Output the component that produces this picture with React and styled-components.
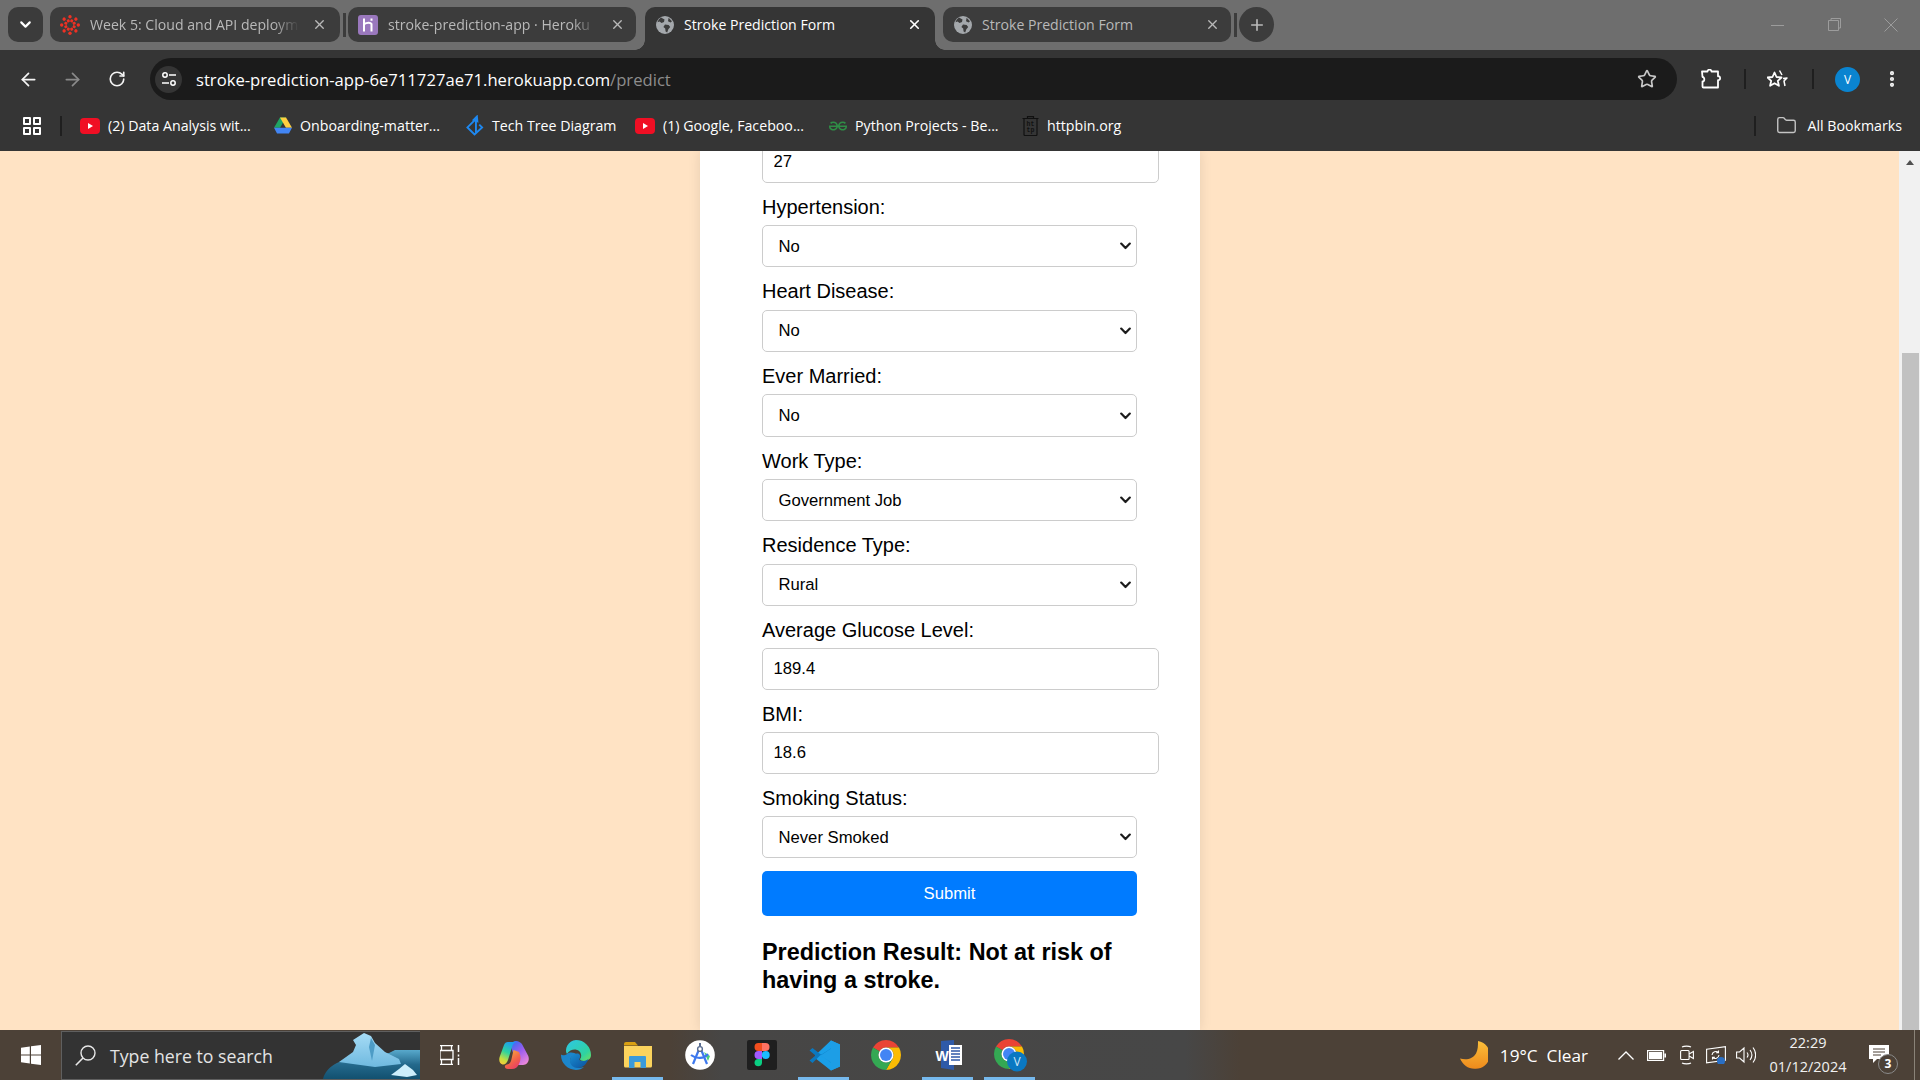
import React from "react";
import styled, { createGlobalStyle } from "styled-components";
import { X, Plus, ChevronDown, ArrowLeft, ArrowRight, RotateCw, Star, EllipsisVertical, Folder } from "lucide-react";
import { SiGeeksforgeeks } from "react-icons/si";

const Global = createGlobalStyle`
  html, body { margin: 0; padding: 0; height: 100%; overflow: hidden; }
  body { font-family: "Liberation Sans", Arial, sans-serif; }
  * { box-sizing: border-box; }
`;
const UI = `"Open Sans", "Noto Sans", sans-serif`;

const Screen = styled.div`width: 1920px; height: 1080px; display: flex; flex-direction: column; overflow: hidden;`;

/* ---------- tab strip ---------- */
const TabStrip = styled.div`height: 50px; flex: none; background: #6e6e6e; display: flex; align-items: flex-start; padding: 7px 0 0 8px;`;
const CaretButton = styled.div`width: 35px; height: 35px; border-radius: 10px; background: #3b3b3b; color: #fff; display: flex; align-items: center; justify-content: center; margin-right: 7px;`;
const Tab = styled.div`
  position: relative; flex: none; width: ${p => p.$w}px; height: ${p => (p.$active ? 43 : 35)}px;
  margin-left: ${p => p.$ml || 0}px; padding-left: ${p => p.$pl || 10}px; padding-right: ${p => p.$pr || 13}px;
  padding-bottom: ${p => (p.$active ? 8 : 0)}px;
  display: flex; align-items: center; gap: 10px;
  background: ${p => (p.$active ? "#353535" : "#3c3c3c")};
  border-radius: ${p => (p.$active ? "10px 10px 0 0" : "10px")};
  color: ${p => (p.$active ? "#ffffff" : "#b9b9b9")};
  ${p => p.$active && `
    &::before, &::after { content: ""; position: absolute; bottom: 0; width: 10px; height: 10px; }
    &::before { right: 100%; background: radial-gradient(circle at 0 0, transparent 9.5px, #353535 10px); }
    &::after { left: 100%; background: radial-gradient(circle at 100% 0, transparent 9.5px, #353535 10px); }
  `}
`;
const TabTitle = styled.span`
  flex: 1; min-width: 0; overflow: hidden; white-space: nowrap; font: 400 14.1px ${UI};
  ${p => p.$fade && `-webkit-mask-image: linear-gradient(90deg, #000 88%, transparent 100%); mask-image: linear-gradient(90deg, #000 88%, transparent 100%);`}
`;
const TabClose = styled(X)`flex: none; margin-left: 3px;`;
const TabSeparator = styled.div`flex: none; width: 3px; height: 24px; margin: 6px ${p => p.$mr || 2}px 0 3px; background: #3c3c3c;`;
const NewTab = styled.div`width: 35px; height: 35px; border-radius: 50%; background: #3c3c3c; color: #b9b9b9; display: flex; align-items: center; justify-content: center;`;
const WindowControls = styled.div`margin-left: auto; height: 35px; display: flex; align-items: center; padding-right: 22px; gap: 43.5px; color: #9c9c9c;`;

/* ---------- toolbar ---------- */
const Toolbar = styled.div`height: 50px; flex: none; background: #353535; display: flex; align-items: flex-start; padding: 8px 0 0 6px; color: #fff;`;
const NavButton = styled.div`width: 44px; height: 42px; flex: none; display: flex; align-items: center; justify-content: center; color: ${p => p.$dim ? "#8a8a8a" : "#f4f4f4"}; margin-left: ${p => p.$ml || 0}px;`;
const Omnibox = styled.div`flex: 1; min-width: 0; height: 42px; margin-left: 11px; border-radius: 21px; background: #1b1b1b; display: flex; align-items: center; padding-left: 5px; padding-right: 20px;`;
const SiteInfo = styled.div`width: 27px; height: 27px; flex: none; border-radius: 50%; background: #353535; display: flex; align-items: center; justify-content: center;`;
const Url = styled.div`margin-left: 14px; padding-top: 1px; font: 400 16.65px ${UI}; color: #fff; white-space: nowrap;`;
const UrlPath = styled.span`color: #8d8d8d;`;
const OmniStar = styled(Star)`margin-left: auto; color: #c8c8c8;`;
const ToolbarRight = styled.div`width: 243px; flex: none; display: flex; align-items: center; height: 42px;`;
const ToolDivider = styled.div`flex: none; width: 2px; height: 20px; background: #1f1f1f; margin-left: ${p => p.$ml}px;`;
const Avatar = styled.div`flex: none; width: 25px; height: 25px; margin-left: 21px; border-radius: 50%; background: #0a84d0; color: #fff; font: 400 12px ${UI}; display: flex; align-items: center; justify-content: center;`;

/* ---------- bookmarks ---------- */
const BookmarksBar = styled.div`height: 51px; flex: none; background: #353535; display: flex; align-items: center; padding-left: 23px; color: #fff; font: 400 14.2px ${UI};`;
const AppsGrid = styled.div`width: 18px; height: 18px; display: grid; grid-template-columns: 8px 8px; grid-auto-rows: 8px; gap: 2px; flex: none;`;
const AppsCell = styled.div`border: 2px solid #fff; border-radius: 1px;`;
const BarDivider = styled.div`flex: none; width: 2px; height: 20px; background: #1f1f1f; margin-left: ${p => p.$ml}px; margin-right: ${p => p.$mr}px;`;
const Bookmark = styled.div`flex: none; width: ${p => p.$w}px; display: flex; align-items: center; gap: ${p => p.$gap || 8}px; white-space: nowrap;`;
const BookmarkIcon = styled.div`flex: none; width: ${p => p.$w || 18}px; height: 20px; display: flex; align-items: center; justify-content: center;`;
const AllBookmarks = styled.div`margin-left: auto; display: flex; align-items: center; padding-right: 18px;`;
const FolderIcon = styled(Folder)`color: #c4c4c4; margin-left: 20px; margin-right: 10px;`;

/* ---------- page ---------- */
const Viewport = styled.div`flex: 1; min-height: 0; display: flex; overflow: hidden;`;
const Page = styled.div`flex: 1; min-width: 0; background: #ffe3c4; overflow: hidden;`;
const Card = styled.div`width: 500px; height: 100%; margin: 0 auto; background: #fff; box-shadow: 0 0 12px rgba(0, 0, 0, 0.1); padding-left: 62.5px; overflow: hidden;`;
const Form = styled.form`display: block; margin-top: -9.9px;`;
const Label = styled.label`display: block; font-size: 20px; line-height: 23px; color: #000; margin-bottom: 6.3px;`;
const TextInput = styled.input`display: block; width: 397px; height: 41.5px; padding: 0 10.5px; margin-bottom: 13px; border: 1px solid #ccc; border-radius: 5px; background: #fff; font: 400 16.67px "Liberation Sans", Arial, sans-serif; color: #000; outline: none;`;
const SelectField = styled.div`position: relative; width: 375px; height: 42.5px; margin-bottom: 12.9px;`;
const Select = styled.select`display: block; width: 100%; height: 100%; padding: 0 30px 0 15.5px; appearance: none; border: 1px solid #ccc; border-radius: 5px; background: #fff; font: 400 16.67px "Liberation Sans", Arial, sans-serif; color: #000; outline: none;`;
const SelectArrow = styled.svg`position: absolute; right: 6.5px; top: 50%; margin-top: -4px; pointer-events: none;`;
const Submit = styled.button`display: block; width: 375px; height: 45px; border: 0; border-radius: 5px; background: #007bff; color: #fff; font: 400 16.67px "Liberation Sans", Arial, sans-serif; padding: 0;`;
const Result = styled.h3`width: 375px; margin: 22.7px 0 0; font-size: 23.4px; line-height: 27.5px; font-weight: 700; color: #000;`;
const Scrollbar = styled.div`flex: none; width: 21px; background: #f1f1f1; display: flex; flex-direction: column; align-items: center; padding-left: 1px;`;
const ScrollUp = styled.div`width: 0; height: 0; margin-top: 9px; border-left: 4.5px solid transparent; border-right: 4.5px solid transparent; border-bottom: 5px solid #505050;`;
const ScrollThumb = styled.div`width: 17px; height: 677px; margin-top: auto; background: #c1c1c1;`;

/* ---------- taskbar ---------- */
const Taskbar = styled.div`
  height: 50px; flex: none; display: flex; align-items: center; color: #fff;
  background: linear-gradient(90deg, #4c4137 0, #4c4137 670px, #474645 722px, #474747 1185px, #4c4137 1240px, #4c4137 100%);
`;
const StartButton = styled.div`width: 61px; height: 50px; flex: none; display: flex; align-items: center; justify-content: center;`;
const SearchBox = styled.div`width: 359px; height: 49px; flex: none; align-self: flex-end; background: #333; border: 1px solid #5f5f5f; border-right: 0; display: flex; align-items: center; padding-left: 13px; overflow: hidden; color: #e4e4e4; font: 400 17.7px ${UI};`;
const SearchText = styled.span`margin-left: 14px; white-space: nowrap;`;
const Iceberg = styled.svg`margin-left: auto; align-self: flex-end; flex: none;`;
const TaskView = styled.div`width: 63px; flex: none; display: flex; align-items: center; justify-content: center; padding-right: 4px;`;
const Slot = styled.div`
  position: relative; width: 62px; height: 50px; flex: none; display: flex; align-items: center; justify-content: center;
  ${p => p.$open && `&::after { content: ""; position: absolute; left: 5px; right: 6px; bottom: 0; height: 3px; background: #76b9ed; }`}
`;
const Tray = styled.div`margin-left: auto; display: flex; align-items: center; height: 50px; position: relative;`;
const Weather = styled.div`display: flex; align-items: center; gap: 12px; font: 400 17.2px ${UI}; white-space: pre; margin-right: 30px;`;
const TrayIcon = styled.div`flex: none; width: ${p => p.$w}px; margin-right: ${p => p.$mr}px; display: flex; align-items: center; justify-content: center;`;
const Clock = styled.div`width: 80px; margin-left: -1px; margin-right: 21px; text-align: center; font: 400 14.5px/24px ${UI}; color: #f1f1f1;`;
const Notification = styled.div`position: relative; width: 20px; height: 20px; margin-right: 31px; flex: none;`;
const Badge = styled.div`position: absolute; left: 9px; top: 9px; width: 20px; height: 20px; border-radius: 50%; border: 1px solid #8a8a8a; background: #4c4137; color: #fff; font: 700 12px/18px ${UI}; text-align: center;`;
const EdgeLine = styled.div`position: absolute; right: 5px; top: 0; bottom: 0; width: 1px; background: #8a8378;`;

/* ---------- icons ---------- */
const CanvasIcon = () => (
  <svg width="20" height="20" viewBox="0 0 20 20" fill="#ee3124">
    {[0, 45, 90, 135, 180, 225, 270, 315].map(a => (
      <g key={a} transform={`rotate(${a} 10 10)`}>
        <circle cx="10" cy="1.7" r="1.7" />
        <rect x="8.6" y="4" width="2.8" height="3" rx="0.9" transform="rotate(22.5 10 10)" />
      </g>
    ))}
  </svg>
);
const HerokuIcon = () => (
  <svg width="20" height="20" viewBox="0 0 20 20">
    <rect width="20" height="20" rx="3" fill="#9a78bd" />
    <path d="M6 3.5v13M6 9c3-1.6 6.5-2 7.5 0v7.5M13.5 3.5v2.3" fill="none" stroke="#fff" strokeWidth="2" />
  </svg>
);
const GlobeIcon = () => (
  <svg width="18" height="18" viewBox="0 0 18 18">
    <circle cx="9" cy="9" r="9" fill="#a4a8ac" />
    <path d="M5 1.6 8.5 3.6 8 6 5.5 7 3.6 5.6 1.4 6.2A8 8 0 0 1 5 1.6ZM9 8.4l3.6.6 1.6 2-2 2.6-1 3-1.6-1-.4-3-1.8-1.6ZM12.6 1.8l3.4 3.4-1.4 1.4-2.6-1.4Z" fill="#3c3c3c" />
  </svg>
);
const TuneIcon = () => (
  <svg width="16" height="16" viewBox="0 0 16 16" fill="none" stroke="#fff" strokeWidth="1.5">
    <circle cx="4" cy="4" r="2.2" /><path d="M8 4h7M1 12h7" /><circle cx="12" cy="12" r="2.2" />
  </svg>
);
const YouTubeIcon = () => (
  <svg width="20" height="16" viewBox="0 0 20 16">
    <rect width="20" height="16" rx="4" fill="#f00f24" />
    <path d="M8 5l5 3-5 3Z" fill="#fff" />
  </svg>
);
const DriveIcon = () => (
  <svg width="19" height="17" viewBox="0 0 19 17">
    <path d="M6.3 0h6.4l-6.3 11H0Z" fill="#1fa463" />
    <path d="M6.3 0h6.4L19 11h-6.4Z" fill="#ffcf3f" />
    <path d="M0 11h19l-3.2 6H3.2Z" fill="#4285f4" />
  </svg>
);
const TechTreeIcon = () => (
  <svg width="19" height="22" viewBox="0 0 19 22" fill="none" stroke="#1e88f0" strokeWidth="2">
    <path d="M9 5 1.5 12.5 9 20l8-7.5-3-3" />
    <path d="M10.500 18V3" strokeWidth="2" />
    <path d="M8 4.500 11.500 1l.5 5Z" fill="#1e88f0" />
  </svg>
);
const HttpbinIcon = () => (
  <svg width="17" height="20" viewBox="0 0 17 20">
    <path d="M5.500 2V.7h6V2M.5 2.500h16M2 3v15.500c0 .6.4 1 1 1h11c.6 0 1-.4 1-1V3" fill="none" stroke="#111" strokeWidth="1.2" />
    <text x="8.500" y="10" textAnchor="middle" fontFamily="Liberation Mono, monospace" fontWeight="700" fontSize="6.500" fill="#111">ht</text>
    <text x="8.500" y="16" textAnchor="middle" fontFamily="Liberation Mono, monospace" fontWeight="700" fontSize="6.500" fill="#111">tp</text>
  </svg>
);
const PuzzleIcon = () => (
  <svg width="22" height="20" viewBox="0 0 22 20" fill="none" stroke="#fff" strokeWidth="1.8" strokeLinejoin="round">
    <path d="M1 2.500h5.500c0-2.400 4-2.400 4 0H17v4.800c2.800-.6 2.800 4.400 0 3.800V18.500H2.500c-.8 0-1-.4-1-1V12.500c2.400.4 2.400-4.800 0-4.500Z" />
  </svg>
);
const StarListIcon = () => (
  <svg width="22" height="20" viewBox="0 0 22 20" fill="none" stroke="#fff" strokeWidth="1.8" strokeLinejoin="round">
    <path d="M7.500 3.500l2 4.500 5 .5-3.700 3.300 1.100 5-4.400-2.600-4.400 2.600 1.100-5L.5 8.500l5-.5Z" />
    <path d="M12.500 1.500l2.500 4.500M16 9.500l4-.5-3 3 1 5" strokeWidth="1.500" />
  </svg>
);
const WindowsLogo = () => (
  <svg width="20" height="20" viewBox="0 0 20 20" fill="#fff">
    <path d="M0 2.800 8.800 1.500V9.500H0ZM10 1.300 20 0V9.500H10ZM0 10.600H8.800V18.600L0 17.300ZM10 10.600H20V20L10 18.700Z" />
  </svg>
);
const SearchIcon = () => (
  <svg width="21" height="21" viewBox="0 0 21 21" fill="none" stroke="#e8e8e8" strokeWidth="1.400">
    <circle cx="13" cy="8" r="7" /><path d="M8 13 .8 20.300" strokeWidth="1.600" />
  </svg>
);
const IcebergArt = () => (
  <Iceberg width="97" height="46" viewBox="0 0 97 46">
    <defs>
      <linearGradient id="ice" x1="0" y1="0" x2="0" y2="1"><stop offset="0" stopColor="#a6dcf6" /><stop offset="1" stopColor="#6fb9df" /></linearGradient>
      <linearGradient id="sea" x1="0" y1="0" x2="0" y2="1"><stop offset="0" stopColor="#58a9cc" /><stop offset="0.5" stopColor="#24698c" /><stop offset="1" stopColor="#12506f" /></linearGradient>
    </defs>
    <path d="M0 46C3 34 16 26 36 24L66 20 72 17H97V46Z" fill="url(#sea)" />
    <path d="M16 29 30 19 33 12 30 7 41 0 48 3 52 10 62 19 76 26 78 31 52 34 30 31Z" fill="url(#ice)" />
    <path d="M48 5 46 14 49 28 52 12Z" fill="#4d9cc6" />
    <path d="M68 42 76 36 82 31 90 37 94 42 84 44Z" fill="#cdeefb" />
  </Iceberg>
);
const TaskViewIcon = () => (
  <svg width="20" height="20" viewBox="0 0 20 20" fill="none" stroke="#fff" strokeWidth="1.300">
    <path d="M0 .7h13M0 19.300h13M0 5.500h13v9H0ZM1.500.7v4.800M11.500.7v4.800M1.500 14.500v4.800M11.500 14.500v4.800" />
    <path d="M18.500 0v7M18.500 9.500v2M18.500 13v7" strokeWidth="1.500" />
  </svg>
);
const CopilotIcon = () => (
  <svg width="30" height="28" viewBox="0 0 30 28">
    <defs>
      <linearGradient id="cpA" x1="0.6" y1="0" x2="0.2" y2="1"><stop offset="0" stopColor="#1d9cf2" /><stop offset="0.45" stopColor="#2dd3a0" /><stop offset="0.8" stopColor="#c9de3e" /><stop offset="1" stopColor="#f7c93a" /></linearGradient>
      <linearGradient id="cpB" x1="0.2" y1="0" x2="0.8" y2="1"><stop offset="0" stopColor="#3b6df0" /><stop offset="0.45" stopColor="#9a5cf0" /><stop offset="1" stopColor="#f08ad8" /></linearGradient>
      <linearGradient id="cpC" x1="0.2" y1="0" x2="0.8" y2="1"><stop offset="0" stopColor="#f7b23a" /><stop offset="0.6" stopColor="#f2604a" /><stop offset="1" stopColor="#e8396a" /></linearGradient>
    </defs>
    <path d="M16 0C20 0 23 2 24 5L29.300 15C31 20 28 24 24 24H18L12 6C13 3 14 0 16 0Z" fill="url(#cpB)" />
    <path d="M9 1H18C15 1 14 3 13 6L9 19C8 22 6 24 3.500 23.500.5 23-.5 19 .8 15.500L5 4C5.800 2 7 1 9 1Z" fill="url(#cpA)" />
    <path d="M14.500 9 20 11C22 15 22 19 20 23 19 26 16 28 13 28H9C5 28 5 24 8 23.500 11 23 12 21 12.500 18Z" fill="url(#cpC)" />
  </svg>
);
const EdgeIcon = () => (
  <svg width="30" height="30" viewBox="0 0 30 30">
    <defs>
      <linearGradient id="edA" x1="0" y1="0" x2="1" y2="1"><stop offset="0" stopColor="#2ec6e8" /><stop offset="0.7" stopColor="#2fd3a0" /><stop offset="1" stopColor="#72e05a" /></linearGradient>
      <linearGradient id="edB" x1="0" y1="0" x2="1" y2="1"><stop offset="0" stopColor="#1a8ed0" /><stop offset="1" stopColor="#0b4f9e" /></linearGradient>
    </defs>
    <path d="M15 0a15 15 0 0 1 15 15c0 4-3.500 6-7 6-2.500 0-4-1-4-2 2-2 1.500-6-1-8-3-2.500-9-2-12 3C3 10 7 0 15 0Z" fill="url(#edA)" />
    <path d="M6 14C2 17 .5 14 0 15a15 15 0 0 0 15 15c3 0 6-1 8-3-5 2-11 0-13-4-2-4 0-8 6-8-3-3-7-3-10-1Z" fill="#1c86cc" />
    <path d="M9 21c0-5 4-8 8-7.500 2 .3 3 3 1.500 5-1 1.500 1 3 4 2.500 2-.3 4-1 5-2.500-2 6-6 9.500-11 9.500-4 0-7.500-3-7.500-7Z" fill="url(#edB)" />
  </svg>
);
const ExplorerIcon = () => (
  <svg width="28" height="27" viewBox="0 0 28 27">
    <path d="M0 2a2 2 0 0 1 2-2h9l3 3.500H0Z" fill="#d9a012" />
    <path d="M0 4h28v20a1.500 1.500 0 0 1-1.500 1.500h-25A1.500 1.500 0 0 1 0 24Z" fill="#fbd35d" />
    <path d="M5 25V15a1 1 0 0 1 1-1h15a1 1 0 0 1 1 1v11h-5.500v-6H10.500v6H5Z" fill="#3a9ad9" />
  </svg>
);
const AndroidStudioIcon = () => (
  <svg width="30" height="30" viewBox="0 0 30 30">
    <circle cx="15" cy="15" r="14.800" fill="#fff" />
    <path d="M19 12l6 4-2 5Z" fill="#4ccf7a" />
    <path d="M15 7 8 24M15 7l7 17M6 15c5 4 13 4 17-1" fill="none" stroke="#3d78ee" strokeWidth="2.200" />
    <path d="M15 3v4" stroke="#5a6d90" strokeWidth="2" />
    <circle cx="15" cy="9" r="2.400" fill="#fff" stroke="#5a6d90" strokeWidth="1.400" />
  </svg>
);
const FigmaIcon = () => (
  <svg width="30" height="30" viewBox="0 0 30 30">
    <rect width="30" height="30" rx="2" fill="#1f1f1f" />
    <path d="M7.500 7A4 4 0 0 1 11.500 3H15v8h-3.500a4 4 0 0 1-4-4Z" fill="#f24e1e" />
    <path d="M15 3h3.500a4 4 0 0 1 0 8H15Z" fill="#ff7262" />
    <path d="M7.500 15a4 4 0 0 1 4-4H15v8h-3.500a4 4 0 0 1-4-4Z" fill="#a259ff" />
    <circle cx="18.700" cy="15" r="4" fill="#1abcfe" />
    <path d="M7.500 23a4 4 0 0 1 4-4H15v4a3.800 3.800 0 0 1-7.500 0Z" fill="#0acf83" />
  </svg>
);
const VSCodeIcon = () => (
  <svg width="31" height="31" viewBox="0 0 31 31">
    <path d="M22 .5 31 4.500v22L22 30.500 6 15.500Z" fill="#1a9fe8" />
    <path d="M22 .5v8L12 15.500l10 7v8L6 18Z" fill="#1a9fe8" />
    <path d="M22 8.500v14L3.500 8 .5 10.500 6.500 15.500.5 20.500 3.500 23 11 15.500Z" fill="#0b78bf" />
    <path d="M22 22.500v8L23 30 31 26.500V4.500L22 .5v8l-10.500 7Z" fill="#1d9ee6" />
  </svg>
);
const ChromeGlyph = ({ size = 30 }) => (
  <svg width={size} height={size} viewBox="4 4 40 40">
    <path d="M6.680 14A20 20 0 0 1 41.320 14H24A10 10 0 0 0 15.340 19Z" fill="#ea4335" />
    <path d="M41.320 14A20 20 0 0 1 24 44L32.660 29A10 10 0 0 0 24 14Z" fill="#fbbc04" />
    <path d="M24 44A20 20 0 0 1 6.680 14L15.340 19A10 10 0 0 0 32.660 29Z" fill="#34a853" />
    <circle cx="24" cy="24" r="10" fill="#fff" />
    <circle cx="24" cy="24" r="8" fill="#4285f4" />
  </svg>
);
const WordIcon = () => (
  <svg width="28" height="30" viewBox="0 0 28 30">
    <path d="M7 1 20 0v30L7 28Z" fill="#2f5aa8" />
    <rect x="15" y="5" width="13" height="20" fill="#fff" />
    <path d="M17 8h9M17 11h9M17 14h9M17 17h9M17 20h9" stroke="#2f5aa8" strokeWidth="1.500" />
    <text x="8" y="21" textAnchor="middle" fontFamily="Liberation Sans, sans-serif" fontWeight="700" fontSize="14" fill="#fff">W</text>
  </svg>
);
const ChromeProfileIcon = () => (
  <svg width="33" height="33" viewBox="0 0 33 33">
    <svg x="0" y="0" width="30" height="30" viewBox="4 4 40 40">
      <path d="M6.680 14A20 20 0 0 1 41.320 14H24A10 10 0 0 0 15.340 19Z" fill="#ea4335" />
      <path d="M41.320 14A20 20 0 0 1 24 44L32.660 29A10 10 0 0 0 24 14Z" fill="#fbbc04" />
      <path d="M24 44A20 20 0 0 1 6.680 14L15.340 19A10 10 0 0 0 32.660 29Z" fill="#34a853" />
      <circle cx="24" cy="24" r="10" fill="#fff" />
      <circle cx="24" cy="24" r="8" fill="#4285f4" />
    </svg>
    <circle cx="23" cy="22.500" r="10" fill="#0a78c2" />
    <text x="23" y="27" textAnchor="middle" fontFamily="Open Sans, sans-serif" fontSize="12" fill="#cfe6f7">V</text>
  </svg>
);
const MoonIcon = () => (
  <svg width="28" height="28" viewBox="0 0 28 28">
    <defs><linearGradient id="moon" x1="0" y1="0" x2="0" y2="1"><stop offset="0" stopColor="#fbbf3a" /><stop offset="1" stopColor="#ee8a1c" /></linearGradient></defs>
    <path d="M18 0a14 14 0 0 1-3 27.800C8 28 3 24 0 17.500c7 2 13 0 16-5 2-4 2-8 2-12.500Z" fill="url(#moon)" />
  </svg>
);
const ChevronIcon = () => <svg width="16" height="9" viewBox="0 0 16 9" fill="none" stroke="#fff" strokeWidth="1.300"><path d="M.5 8.500 8 1l7.500 7.500" /></svg>;
const BatteryIcon = () => (
  <svg width="19" height="11" viewBox="0 0 19 11">
    <rect x=".6" y=".6" width="16" height="9.800" fill="none" stroke="#fff" strokeWidth="1.200" />
    <rect x="2" y="2" width="13.200" height="7" fill="#fff" />
    <rect x="17.400" y="3.500" width="1.600" height="4" fill="#fff" />
  </svg>
);
const CameraIcon = () => (
  <svg width="14" height="20" viewBox="0 0 14 20" fill="none" stroke="#fff" strokeWidth="1.100">
    <rect x=".6" y="5.500" width="8.500" height="9" rx="1" />
    <path d="M9.100 9 13.400 6.500v7L9.100 11M2 2c2-1.200 7-1.200 9 0M2 18c2 1.200 7 1.200 9 0" />
  </svg>
);
const SyncIcon = () => (
  <svg width="20" height="18" viewBox="0 0 20 18" fill="none" stroke="#fff" strokeWidth="1.100">
    <path d="M.6 3.200 19.400.7v13.500L.6 16.800Z" />
    <path d="M6 9a4 4 0 0 1 6.500-2.500M12.500 4.500v2.200h-2.400M13 9a4 4 0 0 1-6.500 2.500M6.500 13.500v-2.200h2.400" />
    <circle cx="15" cy="15" r="4" fill="#2a6fc4" stroke="none" />
  </svg>
);
const VolumeIcon = () => (
  <svg width="20" height="18" viewBox="0 0 20 18" fill="none" stroke="#fff" strokeWidth="1.100">
    <path d="M.6 6h3L8 2v14l-4.400-4h-3ZM11 6.500c1.200 1.500 1.200 3.500 0 5M14 4c2.300 3 2.300 7 0 10M17 1.500c3.500 4.500 3.500 10.500 0 15" />
  </svg>
);
const NotificationIcon = () => (
  <svg width="20" height="20" viewBox="0 0 20 20">
    <path d="M0 0h20v14H8l-4 4v-4H0Z" fill="#fff" />
    <path d="M4 4h12M4 7h12M4 10h8" stroke="#4c4137" strokeWidth="1" />
  </svg>
);

const Dropdown = ({ value }) => (
  <SelectField>
    <Select defaultValue={value}><option>{value}</option></Select>
    <SelectArrow width="11" height="8" viewBox="0 0 11 8" fill="none" stroke="#1c1c1c" strokeWidth="2.200" strokeLinecap="round" strokeLinejoin="round">
      <path d="M1.200 1.600 5.500 6l4.300-4.400" />
    </SelectArrow>
  </SelectField>
);

export default function App() {
  return (
    <Screen>
      <Global />
      <TabStrip>
        <CaretButton><ChevronDown size={17} strokeWidth={3} /></CaretButton>
        <Tab $w={290}>
          <CanvasIcon />
          <TabTitle $fade>Week 5: Cloud and API deployment</TabTitle>
          <TabClose size={15} strokeWidth={2.2} />
        </Tab>
        <TabSeparator $mr={2} />
        <Tab $w={288} $pr={11}>
          <HerokuIcon />
          <TabTitle $fade>stroke-prediction-app · Heroku</TabTitle>
          <TabClose size={15} strokeWidth={2.2} />
        </Tab>
        <Tab $w={290} $ml={9} $pl={11} $active>
          <GlobeIcon />
          <TabTitle>Stroke Prediction Form</TabTitle>
          <TabClose size={15} strokeWidth={2.6} />
        </Tab>
        <Tab $w={288} $ml={8} $pl={11} $pr={11}>
          <GlobeIcon />
          <TabTitle>Stroke Prediction Form</TabTitle>
          <TabClose size={15} strokeWidth={2.2} />
        </Tab>
        <TabSeparator $mr={2} />
        <NewTab><Plus size={18} strokeWidth={2.2} /></NewTab>
        <WindowControls>
          <svg width="13" height="13" viewBox="0 0 13 13" stroke="currentColor" fill="none"><path d="M0 7.500h13" /></svg>
          <svg width="13" height="13" viewBox="0 0 13 13" stroke="currentColor" fill="none"><path d="M.5 2.500h10v10H.5ZM3 2.500V.5h9.500v9.500h-2" /></svg>
          <svg width="14" height="14" viewBox="0 0 14 14" stroke="currentColor" fill="none"><path d="M.5.500l13 13M13.500.500l-13 13" /></svg>
        </WindowControls>
      </TabStrip>

      <Toolbar>
        <NavButton><ArrowLeft size={21} strokeWidth={2} /></NavButton>
        <NavButton $dim><ArrowRight size={21} strokeWidth={2} /></NavButton>
        <NavButton $ml={1}><RotateCw size={18} strokeWidth={2.2} /></NavButton>
        <Omnibox>
          <SiteInfo><TuneIcon /></SiteInfo>
          <Url>stroke-prediction-app-6e711727ae71.herokuapp.com<UrlPath>/predict</UrlPath></Url>
          <OmniStar size={20} strokeWidth={2} />
        </Omnibox>
        <ToolbarRight>
          <NavButton $ml={13}><PuzzleIcon /></NavButton>
          <ToolDivider $ml={10} />
          <NavButton $ml={10}><StarListIcon /></NavButton>
          <ToolDivider $ml={12} />
          <Avatar>V</Avatar>
          <NavButton $ml={10}><EllipsisVertical size={20} strokeWidth={3} /></NavButton>
        </ToolbarRight>
      </Toolbar>

      <BookmarksBar>
        <AppsGrid><AppsCell /><AppsCell /><AppsCell /><AppsCell /></AppsGrid>
        <BarDivider $ml={19} $mr={18} />
        <Bookmark $w={194}><BookmarkIcon $w={20}><YouTubeIcon /></BookmarkIcon>(2) Data Analysis wit...</Bookmark>
        <Bookmark $w={192}><BookmarkIcon><DriveIcon /></BookmarkIcon>Onboarding-matter...</Bookmark>
        <Bookmark $w={169}><BookmarkIcon><TechTreeIcon /></BookmarkIcon>Tech Tree Diagram</Bookmark>
        <Bookmark $w={194}><BookmarkIcon $w={20}><YouTubeIcon /></BookmarkIcon>(1) Google, Faceboo...</Bookmark>
        <Bookmark $w={193}><BookmarkIcon><SiGeeksforgeeks size={18} color="#2f8d46" /></BookmarkIcon>Python Projects - Be...</Bookmark>
        <Bookmark $w={100}><BookmarkIcon $w={17}><HttpbinIcon /></BookmarkIcon>httpbin.org</Bookmark>
        <AllBookmarks>
          <BarDivider $ml={0} $mr={0} />
          <FolderIcon size={21} strokeWidth={1.6} />
          All Bookmarks
        </AllBookmarks>
      </BookmarksBar>

      <Viewport>
        <Page>
          <Card>
            <Form>
              <TextInput readOnly value="27" />
              <Label>Hypertension:</Label>
              <Dropdown value="No" />
              <Label>Heart Disease:</Label>
              <Dropdown value="No" />
              <Label>Ever Married:</Label>
              <Dropdown value="No" />
              <Label>Work Type:</Label>
              <Dropdown value="Government Job" />
              <Label>Residence Type:</Label>
              <Dropdown value="Rural" />
              <Label>Average Glucose Level:</Label>
              <TextInput readOnly value="189.4" />
              <Label>BMI:</Label>
              <TextInput readOnly value="18.6" />
              <Label>Smoking Status:</Label>
              <Dropdown value="Never Smoked" />
              <Submit type="button">Submit</Submit>
              <Result>Prediction Result: Not at risk of having a stroke.</Result>
            </Form>
          </Card>
        </Page>
        <Scrollbar><ScrollUp /><ScrollThumb /></Scrollbar>
      </Viewport>

      <Taskbar>
        <StartButton><WindowsLogo /></StartButton>
        <SearchBox>
          <SearchIcon />
          <SearchText>Type here to search</SearchText>
          <IcebergArt />
        </SearchBox>
        <TaskView><TaskViewIcon /></TaskView>
        <Slot><CopilotIcon /></Slot>
        <Slot><EdgeIcon /></Slot>
        <Slot $open><ExplorerIcon /></Slot>
        <Slot><AndroidStudioIcon /></Slot>
        <Slot><FigmaIcon /></Slot>
        <Slot $open><VSCodeIcon /></Slot>
        <Slot><ChromeGlyph /></Slot>
        <Slot $open><WordIcon /></Slot>
        <Slot $open><ChromeProfileIcon /></Slot>
        <Tray>
          <Weather><MoonIcon /><span>19°C  Clear</span></Weather>
          <TrayIcon $w={16} $mr={13}><ChevronIcon /></TrayIcon>
          <TrayIcon $w={19} $mr={14}><BatteryIcon /></TrayIcon>
          <TrayIcon $w={14} $mr={12}><CameraIcon /></TrayIcon>
          <TrayIcon $w={20} $mr={10}><SyncIcon /></TrayIcon>
          <TrayIcon $w={20} $mr={13}><VolumeIcon /></TrayIcon>
          <Clock>22:29<br />01/12/2024</Clock>
          <Notification>
            <NotificationIcon />
            <Badge>3</Badge>
          </Notification>
          <EdgeLine />
        </Tray>
      </Taskbar>
    </Screen>
  );
}
